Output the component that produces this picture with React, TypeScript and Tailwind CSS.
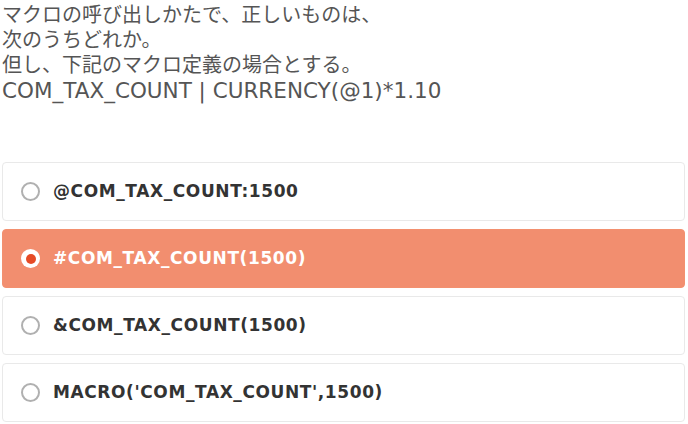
import React from "react";

const options = [
  "@COM_TAX_COUNT:1500",
  "#COM_TAX_COUNT(1500)",
  "&COM_TAX_COUNT(1500)",
  "MACRO('COM_TAX_COUNT',1500)",
];

export default function App() {
  const selected = 1;
  return (
    <div className="w-[688px] h-[424px] bg-white overflow-hidden">
      <div
        className="pl-[2px] pt-[1px] text-[20px] leading-[25px] text-[#555555]"
        style={{ fontFamily: '"Noto Sans CJK JP", sans-serif' }}
      >
        <p>マクロの呼び出しかたで、正しいものは、</p>
        <p>次のうちどれか。</p>
        <p>但し、下記のマクロ定義の場合とする。</p>
        <p
          className="mt-[2px] text-[21.5px] leading-[25px]"
          style={{ fontFamily: '"DejaVu Sans", sans-serif' }}
        >
          COM_TAX_COUNT | CURRENCY(@1)*1.10
        </p>
      </div>
      <div className="mt-[59px] ml-[2px] w-[683px] flex flex-col gap-[8px]">
        {options.map((o, i) => {
          const sel = i === selected;
          return (
            <div
              key={o}
              className={
                sel
                  ? "h-[59px] rounded-[4px] border border-[#f3906f] bg-[#f28e6f] flex items-center pl-[18px]"
                  : "h-[59px] rounded-[4px] border border-[#e9e9e9] bg-white flex items-center pl-[18px]"
              }
            >
              {sel ? (
                <div className="w-[19px] h-[19px] rounded-full bg-white flex items-center justify-center shrink-0">
                  <div className="w-[10px] h-[10px] rounded-full bg-[#e64b26]" />
                </div>
              ) : (
                <div className="w-[19px] h-[19px] rounded-full border-2 border-[#b0b0b0] bg-white shrink-0" />
              )}
              <span
                className={
                  sel
                    ? "ml-[13px] text-[17px] tracking-[0.6px] font-bold text-white"
                    : "ml-[13px] text-[17px] tracking-[0.6px] font-bold text-[#333333]"
                }
                style={{ fontFamily: '"DejaVu Sans", sans-serif' }}
              >
                {o}
              </span>
            </div>
          );
        })}
      </div>
    </div>
  );
}
